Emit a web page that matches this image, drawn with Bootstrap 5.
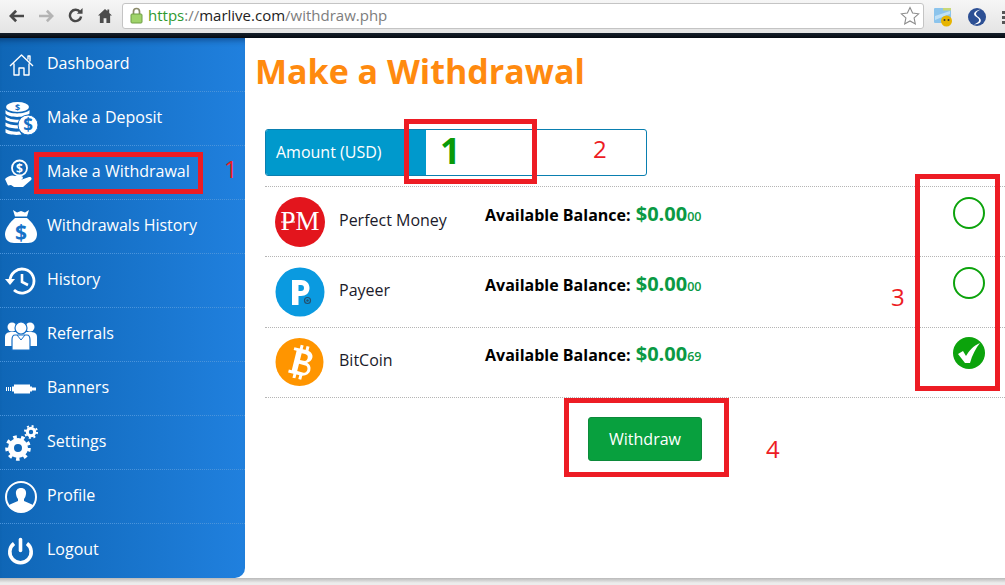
<!DOCTYPE html>
<html lang="en">
<head>
    <meta charset="UTF-8">
    <meta name="viewport" content="width=device-width, initial-scale=1.0">
    <title>Make a Withdrawal</title>
    <link href="https://cdn.jsdelivr.net/npm/bootstrap@5.3.3/dist/css/bootstrap.min.css" rel="stylesheet">
    <style>
        html, body {
            height: 585px;
            overflow: hidden;
        }
        body {
            background-color: #fff;
            font-family: "Open Sans", sans-serif;
            position: relative;
        }
        .chrome-bar {
            height: 33px;
            background: linear-gradient(#f6f6f6, #e4e4e4);
            padding-left: 5px;
            overflow: hidden;
        }
        .chrome-btn {
            width: 24px;
            height: 24px;
            margin-right: 5.250px;
            margin-top: -2px;
            flex: none;
        }
        .chrome-bar svg { flex: none; }
        .omnibox {
            width: 802px;
            height: 26px;
            flex: none;
            margin-top: -2px;
            background: #fff;
            border: 1px solid #c4c4c4;
            border-radius: 3px;
            font-size: 15px;
            color: #7d7d7d;
            padding-left: 7px;
        }
        .omni-lock { margin-right: 5px; }
        .omni-star { margin-right: 3px; }
        .url-https { color: #2f9a2f; }
        .url-host { color: #222; }
        .dark-strip {
            height: 5px;
            background: linear-gradient(#16202c, #050a10);
        }
        .page-main {
            height: 540px;
        }
        .side-menu {
            width: 245px;
            flex: none;
            background: linear-gradient(90deg, #0f66b6, #2080de);
            border-bottom-right-radius: 10px;
            box-shadow: inset 0 7px 6px -5px rgba(0, 20, 50, .45);
        }
        .side-item {
            height: 54px;
            color: #fff;
            font-size: 16px;
            text-decoration: none;
            border-bottom: 1px dotted #4a94dc;
            padding-left: 4px;
        }
        .side-item:last-child { border-bottom: 0; }
        .side-item svg {
            width: 34px;
            height: 36px;
            margin-right: 9px;
            flex: none;
        }
        .side-label { margin-top: -4px; }
        .page-body {
            padding-left: 10px;
            min-width: 0;
        }
        .page-title {
            color: #ff8a0f;
            font-family: "Open Sans", sans-serif;
            font-weight: 700;
            font-size: 34px;
            line-height: 46px;
            margin: 10px 0 35px;
        }
        .pay-area { padding-left: 10px; }
        .amount-box {
            width: 382px;
            height: 47px;
            border: 1px solid #0a7fb0;
            border-radius: 3px;
            margin-bottom: 10px;
        }
        .amount-label {
            width: 160px;
            background: #0099cc;
            color: #fff;
            font-size: 16px;
            padding: 0 0 2px 10px;
            border-radius: 2px 0 0 2px;
        }
        .amount-value {
            color: #0a9a0a;
            font-size: 36px;
            font-weight: 700;
            padding: 0 0 4px 14px;
            line-height: 1;
        }
        .pay-row {
            height: 70.4px;
            border-top: 1px dotted #b5b5b5;
            padding-left: 10px;
        }
        .pay-row:last-of-type { border-bottom: 1px dotted #b5b5b5; height: 71.4px; }
        .pay-logo {
            width: 50px;
            height: 50px;
            flex: none;
            margin-right: 14px;
        }
        .pay-name {
            width: 146px;
            font-size: 16px;
            color: #1a1a2a;
            margin-top: -4px;
        }
        .pay-balance {
            font-size: 16px;
            font-weight: 700;
            color: #000;
            margin-top: -16px;
        }
        .bal-main {
            color: #0a9a44;
            font-size: 20px;
            margin-left: 1px;
        }
        .bal-tiny {
            color: #0a9a44;
            font-size: 12.5px;
            font-weight: 600;
        }
        .pay-check {
            width: 32px;
            height: 32px;
            margin-right: 20px;
            margin-top: -18px;
        }
        .btn-withdraw {
            width: 114px;
            height: 44px;
            margin: 19px 0 0 323px;
            background: #08a03e;
            border: 1px solid #0c8a3a;
            border-radius: 3px;
            color: #fff;
            font-size: 16px;
        }
        .btn-withdraw:hover { background: #08a03e; color: #fff; }
        .page-foot {
            height: 7px;
            background: linear-gradient(#b9b9b9, #ececec 70%);
        }
        .mark-box {
            position: absolute;
            border: 5px solid #ed1c24;
        }
        .mark-num {
            position: absolute;
            color: #ed1c24;
            font-size: 24px;
            line-height: 1;
        }
    </style>
</head>
<body>
    <div class="chrome-bar d-flex align-items-center">
        <div class="chrome-btn d-flex align-items-center justify-content-center">
            <svg width="16" height="14" viewBox="0 0 18 16"><path d="M8 2 2 8l6 6M3 8h14" fill="none" stroke="#484848" stroke-width="3"/></svg>
        </div>
        <div class="chrome-btn d-flex align-items-center justify-content-center">
            <svg width="16" height="14" viewBox="0 0 18 16"><path d="M10 2l6 6-6 6M15 8H1" fill="none" stroke="#b4b4b4" stroke-width="3"/></svg>
        </div>
        <div class="chrome-btn d-flex align-items-center justify-content-center">
            <svg width="15" height="15" viewBox="0 0 16 16"><path d="M13 4.500A6 6 0 1 0 14 9" fill="none" stroke="#484848" stroke-width="2.600"/><path d="M9.500 6h6V0z" fill="#484848"/></svg>
        </div>
        <div class="chrome-btn d-flex align-items-center justify-content-center">
            <svg width="14" height="15" viewBox="0 0 15 16"><path d="M7.500 1 0 8h2v8h4v-5h3v5h4V8h2l-3-2.800V1.500h-2v1.800z" fill="#4c4c4c"/></svg>
        </div>
        <div class="omnibox d-flex align-items-center">
            <svg width="13" height="17" viewBox="0 0 13 17" class="omni-lock"><path d="M3.500 8V4.500a3 3 0 0 1 6 0V8" fill="none" stroke="#8a8a6a" stroke-width="1.700"/><rect x="1" y="7" width="11" height="9" rx="1" fill="#9fd36a" stroke="#6f9f45"/></svg>
            <span><span class="url-https">https</span>://<span class="url-host">marlive.com</span>/withdraw.php</span>
            <svg width="20" height="20" viewBox="0 0 20 20" class="ms-auto omni-star"><path d="M10 1.500l2.600 5.600 6 .7-4.500 4.100 1.200 6L10 15l-5.300 2.900 1.200-6L1.400 7.800l6-.7z" fill="#fff" stroke="#8c8c8c" stroke-width="1.100"/></svg>
        </div>
        <svg width="20" height="20" viewBox="0 0 20 20" style="margin-left:10px"><rect x="0" y="1" width="17" height="15" rx="1" fill="#8cc4ec"/><rect x="9" y="1" width="8" height="2.500" fill="#c8d878"/><path d="M1 9l15-5v3L1 13z" fill="#bfe0f6"/><circle cx="12.500" cy="14" r="5.500" fill="#e6b400"/><circle cx="10.500" cy="13" r="1" fill="#333"/><circle cx="14.500" cy="13" r="1" fill="#333"/></svg>
        <svg width="20" height="20" viewBox="0 0 20 20" style="margin-left:13px"><circle cx="10" cy="10" r="9" fill="#2c4f94"/><path d="M14 2.500C7 3.500 5 7.500 9.500 10s3 5.500-3 7.500C14 17.500 16 13 11.500 10S9 4.500 14 2.500z" fill="#fff"/></svg>
        <svg width="4" height="14" viewBox="0 0 4 14" style="margin-left:15px"><path d="M0 1h4v3H0zM0 6h4v3H0zM0 11h4v3H0z" fill="#555"/></svg>
    </div>
    <div class="dark-strip"></div>

    <div class="page-main d-flex">
        <nav class="side-menu d-flex flex-column">
            <a href="#" class="side-item d-flex align-items-center">
                <svg viewBox="0 0 34 36"><path d="M6 19 17.500 8 29 19M10 16.500V28h5v-7h5v7h5V16.500M24 12.500V9h2v5.500" fill="none" stroke="#fff" stroke-width="1.400" stroke-linejoin="round"/></svg>
                <span class="side-label">Dashboard</span>
            </a>
            <a href="#" class="side-item d-flex align-items-center">
                <svg viewBox="0 0 34 36"><g fill="#fff"><ellipse cx="13.500" cy="6" rx="11.500" ry="5"/><path d="M1.500 9c3 4.500 20 4.500 24 0v3.500c-4 4.500-21 4.500-24 0zM1.500 15c3 4 14 4.500 19 3l-4 3.500c-6 .5-13-1-15-3zM1.500 21.500c3 2 9 3 13.500 2.500l-.5 3.500c-5 .2-11-1-13-2.500zM1.500 28c3 2 9 3 14 2.500l2 3c-6 1-14 0-16-2z"/></g><circle cx="24" cy="24" r="10" fill="#fff" stroke="#1670c6" stroke-width="1"/><text x="24" y="30" text-anchor="middle" font-size="17" font-weight="700" fill="#1570c4" font-family="Open Sans">$</text><text x="13.500" y="9.500" text-anchor="middle" font-size="9" font-weight="700" fill="#1570c4" font-family="Open Sans">$</text></svg>
                <span class="side-label">Make a Deposit</span>
            </a>
            <a href="#" class="side-item d-flex align-items-center">
                <svg viewBox="0 0 34 36"><circle cx="15.500" cy="13" r="7.500" fill="none" stroke="#fff" stroke-width="1.800"/><text x="15.500" y="17.500" text-anchor="middle" font-size="12" font-weight="700" fill="#fff" font-family="Open Sans">$</text><path d="M1 24c3-3 7-4.500 10-3h6c2.500 0 2.500 3.500 0 3.500h-5 6l7-2.500c2.500-.5 3.500 2 1.500 3.500L19 32H10l-3-2-3 .5z" fill="#fff"/><path d="M30 24h3v7h-3z" fill="#fff"/></svg>
                <span class="side-label">Make a Withdrawal</span>
            </a>
            <a href="#" class="side-item d-flex align-items-center">
                <svg viewBox="0 0 34 36"><path d="M9 1l4 2.500 4-1.500 4 1.500L25 1l-2 6.500H11z" fill="#fff"/><path d="M11 9h12c5 4 10 11 10 16 0 6-4 9-9 9H10c-5 0-9-3-9-9 0-5 5-12 10-16z" fill="#fff"/><text x="17" y="31" text-anchor="middle" font-size="21" font-weight="700" fill="#1672c8" font-family="Open Sans">$</text></svg>
                <span class="side-label">Withdrawals History</span>
            </a>
            <a href="#" class="side-item d-flex align-items-center">
                <svg viewBox="0 0 34 36"><path d="M6 18a12 12 0 1 1 4 9" fill="none" stroke="#fff" stroke-width="2.800"/><path d="M1 16h10l-5 6z" fill="#fff"/><path d="M18 11v8l6 3" fill="none" stroke="#fff" stroke-width="2.600"/></svg>
                <span class="side-label">History</span>
            </a>
            <a href="#" class="side-item d-flex align-items-center">
                <svg viewBox="0 0 34 36"><g fill="#fff"><circle cx="8" cy="10" r="4.500"/><circle cx="26" cy="10" r="4.500"/><path d="M1 29V20c0-4 3-5 7-5h18c4 0 7 1 7 5v9z"/></g><circle cx="17" cy="11" r="6" fill="#fff" stroke="#1670c6" stroke-width="1.200"/><path d="M11 18h12c2 0 3 1 3 5v10H8V23c0-4 1-5 3-5z" fill="#fff" stroke="#1670c6" stroke-width="1.200"/><path d="M13 18l4 5 4-5" fill="none" stroke="#1670c6"/></svg>
                <span class="side-label">Referrals</span>
            </a>
            <a href="#" class="side-item d-flex align-items-center">
                <svg viewBox="0 0 34 36"><g fill="#fff"><rect x="10" y="13.500" width="16" height="9"/><path d="M8 15.500h2v5H8zM26 15.500h2v5h-2zM28 16.500h4v3h-4zM2 16h1v4H2zM4 16h1v4H4zM6 16h1v4H6z"/></g></svg>
                <span class="side-label">Banners</span>
            </a>
            <a href="#" class="side-item d-flex align-items-center">
                <svg viewBox="0 0 34 36"><circle cx="14" cy="23" r="7" fill="none" stroke="#fff" stroke-width="6"/><g stroke="#fff" stroke-width="3.600" stroke-dasharray="3.500 4.300" fill="none"><circle cx="14" cy="23" r="11"/></g><circle cx="27" cy="7" r="3.700" fill="none" stroke="#fff" stroke-width="3"/><g stroke="#fff" stroke-width="2" stroke-dasharray="2 2.700" fill="none"><circle cx="27" cy="7" r="6"/></g></svg>
                <span class="side-label">Settings</span>
            </a>
            <a href="#" class="side-item d-flex align-items-center">
                <svg viewBox="0 0 34 36"><circle cx="17" cy="18" r="15" fill="none" stroke="#fff" stroke-width="2"/><path d="M17 9c4 0 5.500 3 5 6-.3 2-1 4-2 5v2l7 3c1 .5 2 1 2.500 1.500a15 15 0 0 1-25 0C5 26 6 25.500 7 25l7-3v-2c-1-1-1.700-3-2-5-.5-3 1-6 5-6z" fill="#fff"/></svg>
                <span class="side-label">Profile</span>
            </a>
            <a href="#" class="side-item d-flex align-items-center">
                <svg viewBox="0 0 34 36"><path d="M10 10.500a10.700 10.700 0 1 0 13 0" fill="none" stroke="#fff" stroke-width="3.600"/><path d="M16.500 6.500v11" stroke="#fff" stroke-width="3.600" stroke-linecap="round"/></svg>
                <span class="side-label">Logout</span>
            </a>
        </nav>

        <div class="page-body flex-grow-1">
            <h1 class="page-title">Make a Withdrawal</h1>
            <div class="pay-area">
                <div class="amount-box d-flex">
                    <div class="amount-label d-flex align-items-center">Amount (USD)</div>
                    <div class="amount-value d-flex align-items-center">1</div>
                </div>
                <div class="pay-row d-flex align-items-center">
                    <svg class="pay-logo" viewBox="0 0 50 50"><circle cx="25" cy="25" r="25" fill="#e3151d"/><text x="25" y="33" text-anchor="middle" font-family="Liberation Serif" font-size="27" fill="#fff">PM</text><path d="M6 25h14" stroke="#fff" stroke-width="1"/></svg>
                    <div class="pay-name">Perfect Money</div>
                    <div class="pay-balance">Available Balance: <span class="bal-main">$0.00</span><span class="bal-tiny">00</span></div>
                    <svg class="pay-check ms-auto" viewBox="0 0 32 32"><circle cx="16" cy="16" r="15" fill="#fff" stroke="#0ca30c" stroke-width="2"/></svg>
                </div>
                <div class="pay-row d-flex align-items-center">
                    <svg class="pay-logo" viewBox="0 0 50 50"><circle cx="25" cy="25" r="24.500" fill="#0a9ae0"/><path fill-rule="evenodd" d="M17 13h9c5 0 8.500 3 8.500 8s-3.500 8-8.500 8h-2.500v9H17zM23.500 18v6H26c2 0 3-1 3-3s-1-3-3-3z" fill="#fff"/><circle cx="32.500" cy="33.500" r="3" fill="none" stroke="#24506e" stroke-width="1.200"/><circle cx="32.500" cy="33.500" r="1.200" fill="#24506e"/></svg>
                    <div class="pay-name">Payeer</div>
                    <div class="pay-balance">Available Balance: <span class="bal-main">$0.00</span><span class="bal-tiny">00</span></div>
                    <svg class="pay-check ms-auto" viewBox="0 0 32 32"><circle cx="16" cy="16" r="15" fill="#fff" stroke="#0ca30c" stroke-width="2"/></svg>
                </div>
                <div class="pay-row d-flex align-items-center">
                    <svg class="pay-logo" viewBox="0 0 50 50"><circle cx="24.500" cy="25" r="24" fill="#ff9500"/><g transform="rotate(14 25 25)"><path fill-rule="evenodd" d="M16 12h12c5 0 8 2.500 8 6 0 2.800-1.500 5-4 6 3 .8 5 3 5 6.500 0 4-3.500 7.500-9 7.500H16v-3h3V15h-3zM24.500 16v7H28c2.500 0 3.500-1.500 3.500-3.500S30.500 16 28 16zM24.500 27v7.500H31c2 0 3-1.700 3-3.700S33 27 31 27z" fill="#fff"/><path d="M21.500 8h3v5h-3zM27.500 8h3v5h-3zM21.500 37h3v5h-3zM27.500 37h3v5h-3z" fill="#fff"/></g></svg>
                    <div class="pay-name">BitCoin</div>
                    <div class="pay-balance">Available Balance: <span class="bal-main">$0.00</span><span class="bal-tiny">69</span></div>
                    <svg class="pay-check ms-auto" viewBox="0 0 32 32"><circle cx="16" cy="16" r="16" fill="#0ca30c"/><path d="M5 17l5-3 3 5C16 14 20 9 27 6c-4 5-8 12-10 20h-5z" fill="#fff"/></svg>
                </div>
                <button type="button" class="btn btn-withdraw d-block p-0">Withdraw</button>
            </div>
        </div>
    </div>
    <div class="page-foot"></div>

    <!-- red annotations drawn on top of the screenshot -->
    <div class="mark-box" style="left:34px;top:152px;width:169px;height:42px"></div>
    <div class="mark-box" style="left:404px;top:119px;width:133px;height:65px"></div>
    <div class="mark-box" style="left:915px;top:174px;width:85px;height:217px"></div>
    <div class="mark-box" style="left:564px;top:398px;width:165px;height:79px"></div>
    <div class="mark-num" style="left:224px;top:157px">1</div>
    <div class="mark-num" style="left:593px;top:137px">2</div>
    <div class="mark-num" style="left:891px;top:285px">3</div>
    <div class="mark-num" style="left:766px;top:437px">4</div>

    <script src="https://cdn.jsdelivr.net/npm/bootstrap@5.3.3/dist/js/bootstrap.bundle.min.js"></script>
</body>
</html>
